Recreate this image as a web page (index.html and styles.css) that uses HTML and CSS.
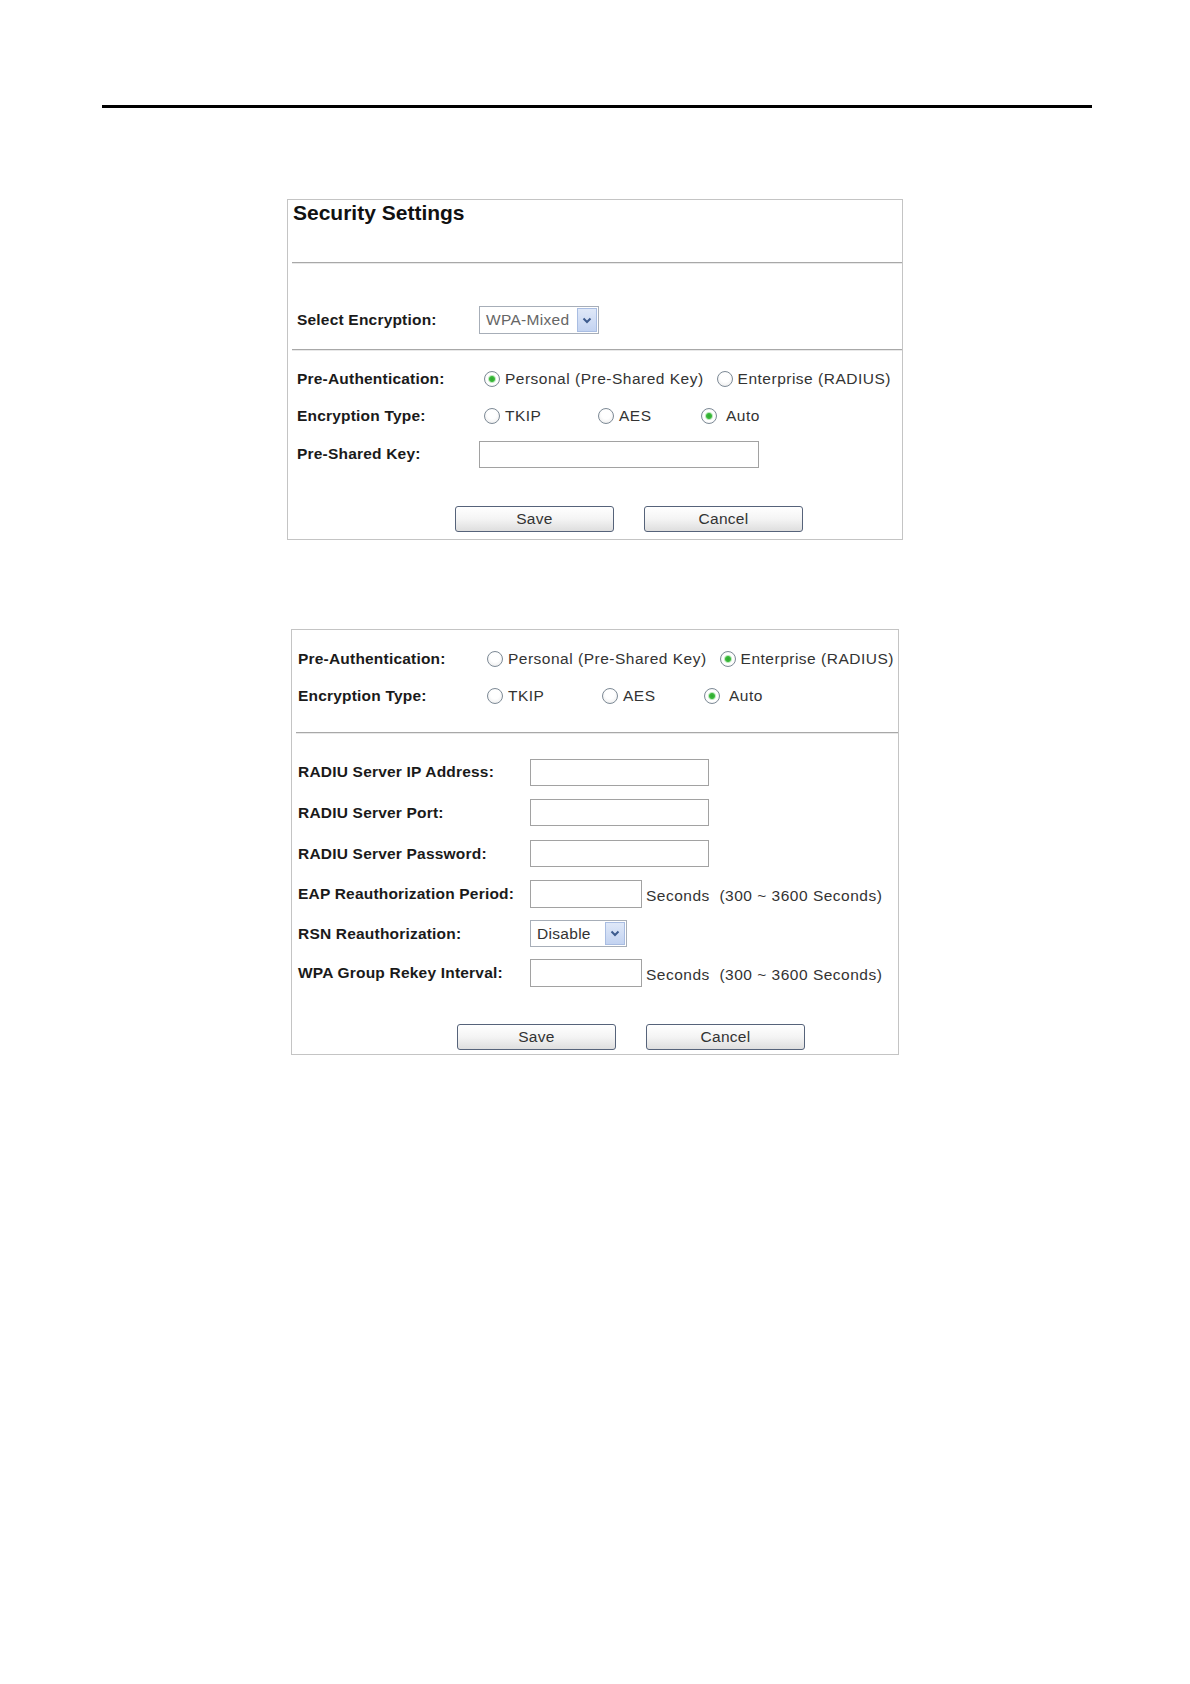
FILE: index.html
```html
<!DOCTYPE html>
<html lang="en">
<head>
    <meta charset="UTF-8">
    <meta name="viewport" content="width=device-width, initial-scale=1.0">
    <title>Security Settings</title>
    <link rel="stylesheet" href="styles.css">
</head>
<body>
    <div class="rule"></div>

    <!-- personal (pre-shared key) -->
    <div class="panel panel-main">
        <h2 class="panel-title">Security Settings</h2>
        <hr class="sep">
        <div class="section sec-enc">
            <div class="row">
                <span class="label">Select Encryption:</span>
                <div class="dropdown dd-enc">
                    <span class="dd-value dim">WPA-Mixed</span>
                    <span class="dd-btn">
                        <svg width="10" height="7" viewBox="0 0 10 7"><path d="M1.5 1.5 L5 5 L8.5 1.5" fill="none" stroke="#3d5b8e" stroke-width="2"/></svg>
                    </span>
                </div>
            </div>
        </div>
        <hr class="sep">
        <div class="section sec-auth">
            <div class="row">
                <span class="label">Pre-Authentication:</span>
                <label class="opt"><input type="radio" name="auth1" checked> Personal (Pre-Shared Key)</label>
                <label class="opt opt-next"><input type="radio" name="auth1"> Enterprise (RADIUS)</label>
            </div>
            <div class="row gap-a">
                <span class="label">Encryption Type:</span>
                <label class="opt w114"><input type="radio" name="type1"> TKIP</label>
                <label class="opt w103"><input type="radio" name="type1"> AES</label>
                <label class="opt auto"><input type="radio" name="type1" checked> Auto</label>
            </div>
            <div class="row gap-b">
                <span class="label">Pre-Shared Key:</span>
                <input type="text" class="field field-key">
            </div>
            <div class="actions">
                <button class="btn">Save</button>
                <button class="btn">Cancel</button>
            </div>
        </div>
    </div>

    <!-- enterprise (radius) -->
    <div class="panel panel-radius">
        <div class="section sec-top">
            <div class="row">
                <span class="label">Pre-Authentication:</span>
                <label class="opt"><input type="radio" name="auth2"> Personal (Pre-Shared Key)</label>
                <label class="opt opt-next"><input type="radio" name="auth2" checked> Enterprise (RADIUS)</label>
            </div>
            <div class="row gap9">
                <span class="label">Encryption Type:</span>
                <label class="opt w115"><input type="radio" name="type2"> TKIP</label>
                <label class="opt w102"><input type="radio" name="type2"> AES</label>
                <label class="opt auto"><input type="radio" name="type2" checked> Auto</label>
            </div>
        </div>
        <hr class="sep">
        <div class="section sec-radius">
            <div class="row">
                <span class="label wide">RADIU Server IP Address:</span>
                <input type="text" class="field">
            </div>
            <div class="row gap-r">
                <span class="label wide">RADIU Server Port:</span>
                <input type="text" class="field">
            </div>
            <div class="row gap-r">
                <span class="label wide">RADIU Server Password:</span>
                <input type="password" class="field">
            </div>
            <div class="row gap-r">
                <span class="label wide">EAP Reauthorization Period:</span>
                <input type="text" class="field field-sm">
                <span class="hint">Seconds&nbsp;&nbsp;(300 ~ 3600 Seconds)</span>
            </div>
            <div class="row gap-s">
                <span class="label wide">RSN Reauthorization:</span>
                <div class="dropdown dd-rsn">
                    <span class="dd-value">Disable</span>
                    <span class="dd-btn">
                        <svg width="10" height="7" viewBox="0 0 10 7"><path d="M1.5 1.5 L5 5 L8.5 1.5" fill="none" stroke="#3d5b8e" stroke-width="2"/></svg>
                    </span>
                </div>
            </div>
            <div class="row gap-s">
                <span class="label wide">WPA Group Rekey Interval:</span>
                <input type="text" class="field field-sm">
                <span class="hint">Seconds&nbsp;&nbsp;(300 ~ 3600 Seconds)</span>
            </div>
            <div class="actions actions-r">
                <button class="btn">Save</button>
                <button class="btn">Cancel</button>
            </div>
        </div>
    </div>
</body>
</html>
```

FILE: styles.css
```css
*{
    box-sizing: border-box;
}
body{
    margin: 0;
    background-color: #fff;
    font-family: "Liberation Sans", Arial, Helvetica, sans-serif;
    color: #1c1c1c;
}
.rule{
    height: 3px;
    background-color: #000;
    margin: 105px 98px 0 102px;
}

/* panels */
.panel{
    border: 1px solid #c4c4c4;
    background-color: #fff;
}
.panel-main{
    width: 616px;
    margin: 91px 0 0 287px;
}
.panel-radius{
    width: 608px;
    margin: 89px 0 0 291px;
}
.panel-title{
    margin: 0;
    height: 62px;
    padding: 0 0 0 5px;
    font-size: 21px;
    line-height: 26px;
    font-weight: bold;
    color: #111;
}
.sep{
    height: 0;
    margin: 0 0 0 4px;
    border: none;
    border-top: 1px solid #a8a8a8;
    border-bottom: 1px solid #e8e8e8;
}
.section{
    padding-left: 9px;
}
.sec-enc{
    padding-top: 42px;
    padding-bottom: 15px;
}
.sec-auth{
    padding-top: 14px;
    padding-bottom: 7px;
}
.sec-top{
    padding: 15px 0 22px 6px;
}
.sec-radius{
    padding: 24px 0 4px 6px;
}

/* rows */
.row{
    display: flex;
    align-items: center;
    height: 28px;
}
.gap-a{
    margin-top: 8.5px;
}
.gap-b{
    margin-top: 10.5px;
}
.gap9{
    margin-top: 9px;
}
.gap-r{
    margin-top: 12.8px;
}
.gap-s{
    margin-top: 11.2px;
}
.label{
    width: 182px;
    flex-shrink: 0;
    font-size: 15.5px;
    font-weight: bold;
    letter-spacing: 0.2px;
    color: #1a1a1a;
}
.label.wide{
    width: 232px;
}

/* radio options */
.opt{
    display: flex;
    align-items: center;
    gap: 5px;
    padding-left: 5px;
    font-size: 15.5px;
    letter-spacing: 0.5px;
    color: #333;
    white-space: nowrap;
}
.sec-top .opt{
    padding-left: 7px;
}
.opt-next{
    padding-left: 13px !important;
}
.w114{ width: 114px; }
.w103{ width: 103px; }
.w115{ width: 115px; }
.w102{ width: 102px; }
.auto{
    gap: 9px;
}
.opt input{
    appearance: none;
    -webkit-appearance: none;
    width: 16px;
    height: 16px;
    margin: 0;
    flex-shrink: 0;
    border: 1px solid #7d8a96;
    border-radius: 50%;
    background: radial-gradient(circle at 50% 40%, #fff 0, #fff 40%, #e6e6e6 100%);
}
.opt input:checked{
    background: radial-gradient(circle, #2ea52e 0, #3cbb3c 2.5px, #bfe8bf 3.5px, #fff 4.5px, #fff 55%, #e6e6e6 100%);
}

/* text inputs */
.field{
    width: 179px;
    height: 27px;
    margin: 0;
    border: 1px solid #a2a2a2;
    background-color: #fff;
}
.field-key{
    width: 280px;
    height: 27px;
}
.field-sm{
    width: 112px;
    height: 28px;
}
.hint{
    margin-left: 4px;
    margin-top: 4px;
    font-size: 15.5px;
    letter-spacing: 0.5px;
    color: #333;
    white-space: nowrap;
}

/* dropdowns */
.dropdown{
    display: flex;
    align-items: stretch;
    height: 28px;
    border: 1px solid #a7aeb8;
    background-color: #fff;
}
.dd-enc{
    width: 120px;
}
.dd-rsn{
    width: 97px;
    height: 27px;
}
.dd-value{
    flex: 1;
    display: flex;
    align-items: center;
    padding-left: 6px;
    font-size: 15.5px;
    letter-spacing: 0.3px;
    color: #333;
}
.dd-value.dim{
    color: #666;
}
.dd-btn{
    width: 20px;
    display: flex;
    align-items: center;
    justify-content: center;
    margin: 1px;
    border: 1px solid #a9bde2;
    background: linear-gradient(#dfe8f8, #c3d3f1);
}

/* buttons */
.actions{
    display: flex;
    gap: 30px;
    margin: 38px 0 0 158px;
}
.actions-r{
    margin: 37.5px 0 0 159px;
}
.btn{
    width: 159px;
    height: 26px;
    padding: 0;
    border: 1px solid #56637a;
    border-radius: 3px;
    background: linear-gradient(#ffffff, #f4f4f4 50%, #dedede);
    font-family: "Liberation Sans", Arial, sans-serif;
    font-size: 15.5px;
    letter-spacing: 0.3px;
    color: #333;
}
```
